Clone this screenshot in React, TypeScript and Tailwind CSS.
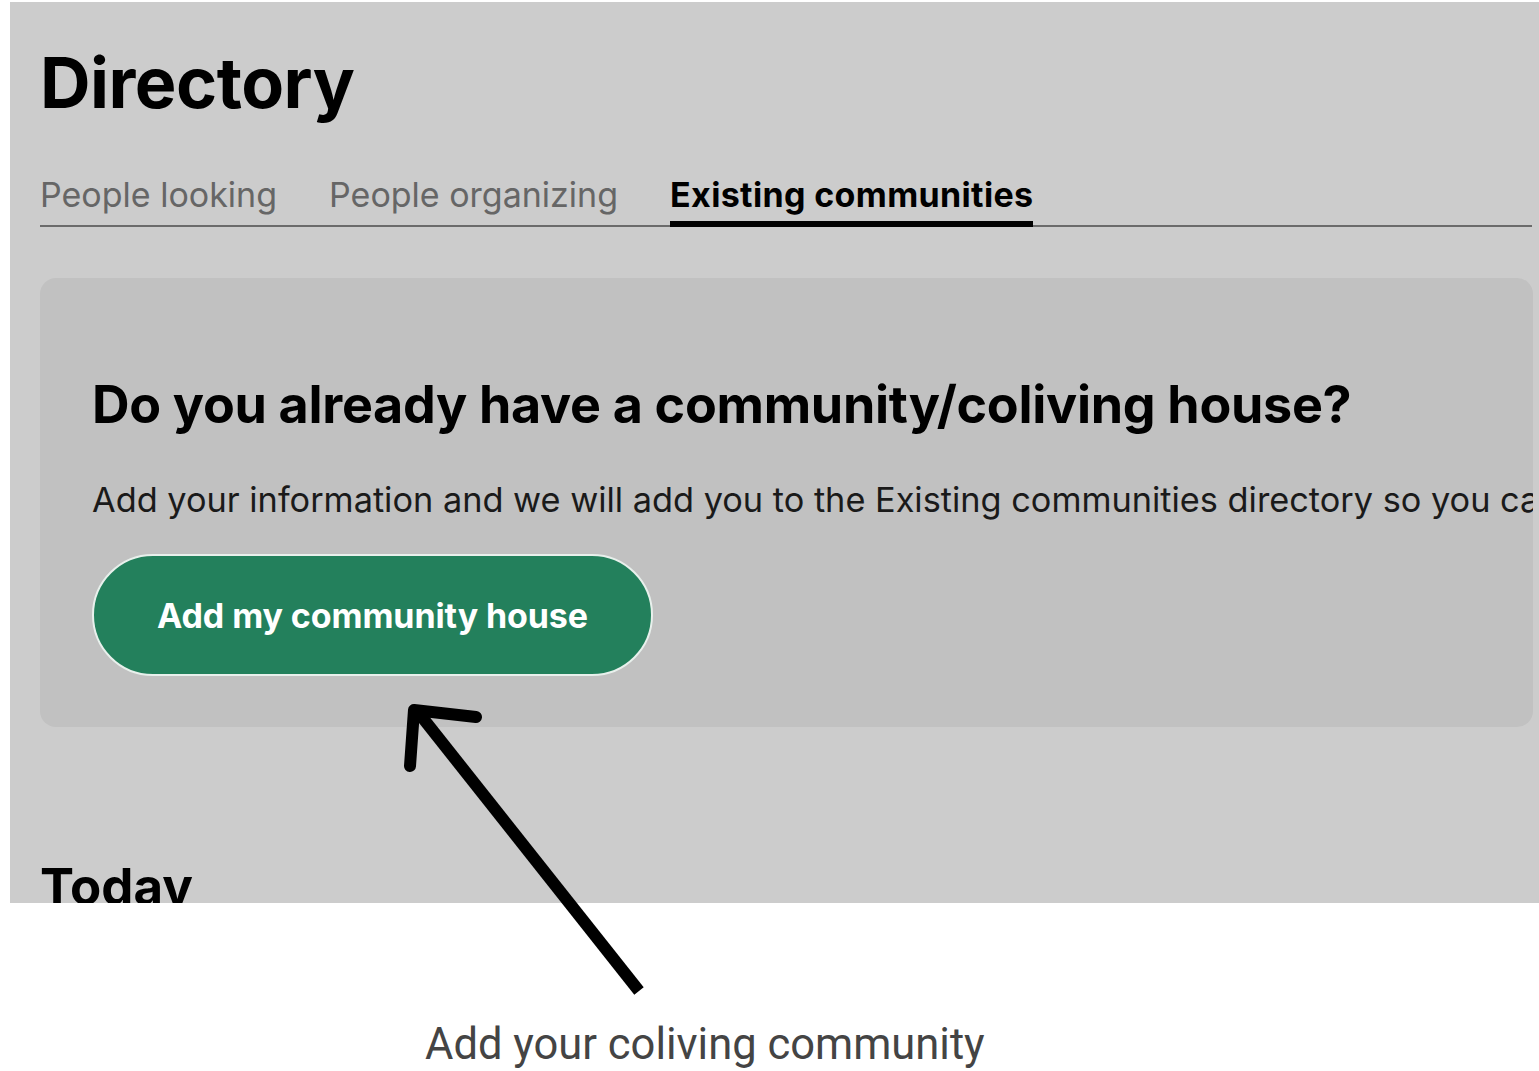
import React from "react";

export default function App() {
  return (
    <div className="relative w-[1539px] h-[1071px] bg-white overflow-hidden" style={{ fontFamily: "Inter, 'Noto Sans', sans-serif" }}>
      <div className="ml-[10px] mt-[2px] w-[1529px] h-[901px] bg-[#cccccc] overflow-hidden pl-[30px] pt-[46px]">
        <h1 className="text-[70px] leading-none font-bold text-black tracking-[-0.5px]">Directory</h1>
        <div className="mt-[55px] w-[1492px] flex gap-[52px] border-b-2 border-[#6b6b6b]">
          <div className="text-[34px] leading-[44px] text-[#666666] pb-[4px]">People looking</div>
          <div className="text-[34px] leading-[44px] text-[#666666] pb-[4px]">People organizing</div>
          <div className="text-[34px] leading-[44px] font-bold text-black pb-[4px] border-b-[6px] border-black -mb-[2px] tracking-[0.35px]">Existing communities</div>
        </div>
        <div className="mt-[51px] w-[1493px] h-[449px] rounded-[16px] bg-[#c1c1c1] overflow-hidden pl-[52px] pt-[101px]">
          <h2 className="text-[52px] leading-none font-bold text-black whitespace-nowrap tracking-[-0.3px]">Do you already have a community/coliving house?</h2>
          <p className="mt-[52px] text-[34.3px] leading-none text-[#1a1a1a] whitespace-nowrap">Add your information and we will add you to the Existing communities directory so you can be found by people looking</p>
          <button className="mt-[37px] w-[561px] h-[122px] rounded-full bg-[#23805c] border-2 border-[#e8f0ec] text-white text-[34px] font-bold tracking-[-0.1px]">Add my community house</button>
        </div>
        <h2 className="mt-[134px] text-[51px] leading-none font-bold text-black">Today</h2>
      </div>
      <div className="mt-[120px] pl-[425px] text-[43.5px] leading-none text-[#444444]" style={{ fontFamily: "Roboto, sans-serif" }}>
        Add your coliving community
      </div>
      <svg className="absolute left-0 top-0 pointer-events-none" width="1539" height="1071" viewBox="0 0 1539 1071">
        <line x1="639" y1="991" x2="418" y2="712" stroke="black" strokeWidth="12" strokeLinecap="butt" />
        <polyline points="410,766 414,710 476,717" fill="none" stroke="black" strokeWidth="12" strokeLinecap="round" strokeLinejoin="round" />
      </svg>
    </div>
  );
}
